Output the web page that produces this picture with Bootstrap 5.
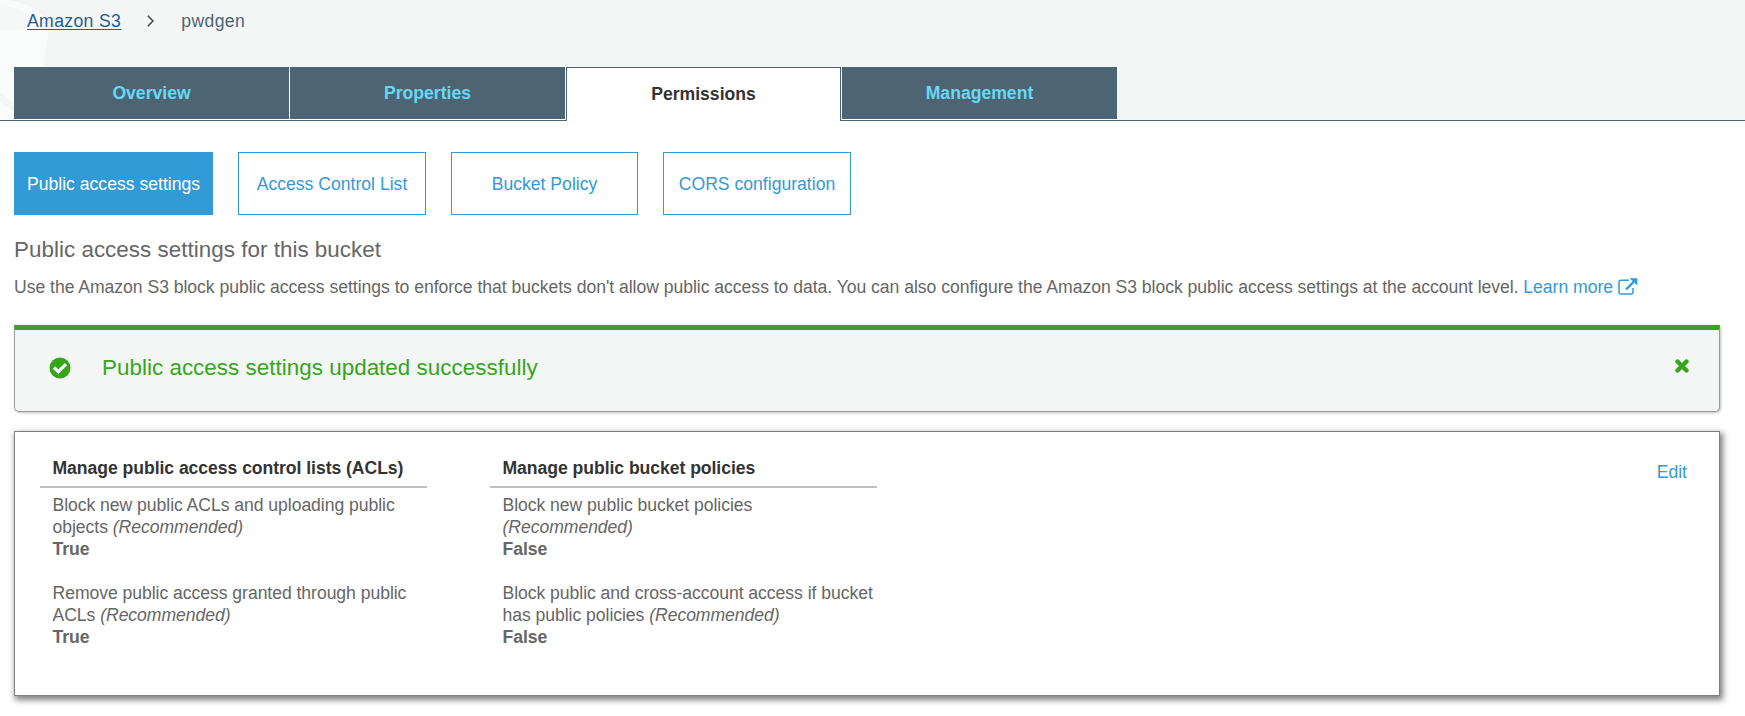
<!DOCTYPE html>
<html lang="en">
<head>
<meta charset="utf-8">
<title>Amazon S3 - pwdgen</title>
<link rel="stylesheet" href="https://cdn.jsdelivr.net/npm/bootstrap@5.3.0/dist/css/bootstrap.min.css">
<style>
body{font-family:"Liberation Sans",Arial,sans-serif;font-size:17.6px;line-height:22px;color:#666;background:#fff;min-height:716px}
a{color:#329ad6;text-decoration:none}
.s3-head{background:#f4f6f5;height:121px;border-bottom:1px solid #4d6472}
.watermark{left:0;top:0;z-index:0}
.crumbs{height:67px;padding:10px 0 0 27px;letter-spacing:.37px}
.crumbs a{color:#1f5c99;text-decoration:underline;text-underline-offset:2px;text-decoration-thickness:1px}
.crumbs .chev{margin:5px 27px 0 26px}
.crumbs .here{color:#4d6472}
.s3-tabs{margin-left:14px;height:54px}
.s3-tabs .nav-link{width:276px;height:53px;padding:0;border:solid #fff;border-width:0 1px 1px 0;border-radius:0;background:#4d6472;background-clip:padding-box;color:#66d9f5;font-weight:700;line-height:52px;text-align:center}
.s3-tabs .nav-link.active{width:275px;height:54px;margin-right:1px;background:#fff;border:solid #4d6472;border-width:1px 1px 0;color:#333;line-height:53px}
.s3-tabs .nav-link.last{width:275px;border-right:0}
.subtabs{padding:31px 0 0 14px;gap:25px}
.subtabs .btn{width:188px;height:63px;padding:0;border:1px solid #329ad6;border-radius:0;color:#329ad6;font-size:17.6px;line-height:62px}
.subtabs .btn.active{width:199px;background:#329ad6;color:#fff;border-color:#329ad6}
.subtabs .btn.slim{width:187px}
.main-area{margin:0 25px 0 14px}
.sec-title{font-size:22.4px;line-height:28px;margin:21px 0 0;font-weight:400;letter-spacing:.03px}
.desc{margin:12px 0 0;white-space:nowrap;letter-spacing:-.036px}
.notice{margin-top:27px;height:87px;border:1px solid #999;border-top:5px solid #36a51c;border-radius:0 0 5px 5px;background:#f4f6f5;box-shadow:1px 1px 3px rgba(0,0,0,.25);color:#36a51c;padding:0 30px 0 34px}
.notice .msg{font-size:22.4px;line-height:28px;margin:24px 0 0 31px;letter-spacing:.03px}
.panel{margin-top:19px;height:265px;border:1px solid #808080;box-shadow:2px 3px 6px 1px rgba(0,0,0,.5);padding:25px 32px 0 25px}
.policy{width:387px;margin-right:63px;letter-spacing:-.05px}
.policy h3{font-size:17.6px;line-height:22px;font-weight:700;color:#333;margin:0;padding:0 0 7px 12.500px;border-bottom:2px solid #bfbfbf}
.policy p{margin:6px 0 22px;padding-left:12.500px}
.policy p+p{margin-top:0}
</style>
<script src="https://cdn.jsdelivr.net/npm/bootstrap@5.3.0/dist/js/bootstrap.bundle.min.js"></script>
</head>
<body>
<header class="s3-head position-relative">
  <svg class="watermark position-absolute" width="50" height="120" aria-hidden="true"><path d="M0 0H8C30 4 49 13 49 30L43 67V120H0Z" fill="#fafcfb"/><path d="M0 5C20 8 34 16 34 22S20 31 0 31Z" fill="#f6f8f7"/><path d="M0 92L18 108V114L0 102Z" fill="#f4f6f5"/></svg>
  <div class="crumbs d-flex align-items-start position-relative">
    <a href="#">Amazon S3</a>
    <svg class="chev" width="7" height="12" viewBox="0 0 7 12" fill="none" stroke="#444" stroke-width="1.5"><path d="M.8.8 6 6 .8 11.2"/></svg>
    <span class="here">pwdgen</span>
  </div>
  <nav class="s3-tabs nav flex-nowrap position-relative">
    <a class="nav-link" href="#">Overview</a>
    <a class="nav-link" href="#">Properties</a>
    <a class="nav-link active" href="#">Permissions</a>
    <a class="nav-link last" href="#">Management</a>
  </nav>
</header>
<div class="subtabs d-flex">
  <button class="btn active">Public access settings</button>
  <button class="btn">Access Control List</button>
  <button class="btn slim">Bucket Policy</button>
  <button class="btn">CORS configuration</button>
</div>
<main class="main-area">
  <h2 class="sec-title">Public access settings for this bucket</h2>
  <p class="desc"><span>Use the Amazon S3 block public access settings to enforce that buckets don't allow public access to data. You can also configure the Amazon S3 block public access settings at the account level.</span> <a href="#">Learn more <svg width="20" height="17" viewBox="0 0 20 17" style="vertical-align:-2px" fill="none" stroke="currentColor" stroke-width="1.5"><path d="M11 2.200H3Q1 2.200 1 4.200V14Q1 16 3 16H13Q15 16 15 14V10"/><path d="M8 11.500 16 3.500" stroke-width="2.400"/><path d="M11.500.3H19.300V7.500Z" fill="currentColor" stroke="none"/></svg></a></p>
  <section class="notice d-flex align-items-start">
    <svg width="22" height="22" viewBox="0 0 22 22" style="margin-top:27px"><circle cx="11" cy="11" r="10.500" fill="#36a51c"/><path d="M5 10.500 9.300 14.700 17 7.200" fill="none" stroke="#f4f6f5" stroke-width="3.200"/></svg>
    <div class="msg">Public access settings updated successfully</div>
    <svg class="ms-auto" width="14" height="14" viewBox="0 0 14 14" style="margin-top:29px" stroke="#36a51c" stroke-width="4.400" stroke-linecap="round"><path d="M2.500 2.500 11.500 11.500M11.500 2.500 2.500 11.500"/></svg>
  </section>
  <section class="panel d-flex align-items-start">
    <div class="policy">
      <h3>Manage public access control lists (ACLs)</h3>
      <p>Block new public ACLs and uploading public<br>objects <em>(Recommended)</em><br><b>True</b></p>
      <p>Remove public access granted through public<br>ACLs <em>(Recommended)</em><br><b>True</b></p>
    </div>
    <div class="policy">
      <h3>Manage public bucket policies</h3>
      <p>Block new public bucket policies<br><em>(Recommended)</em><br><b>False</b></p>
      <p>Block public and cross-account access if bucket<br>has public policies <em>(Recommended)</em><br><b>False</b></p>
    </div>
    <a class="ms-auto mt-1" href="#">Edit</a>
  </section>
</main>
</body>
</html>
